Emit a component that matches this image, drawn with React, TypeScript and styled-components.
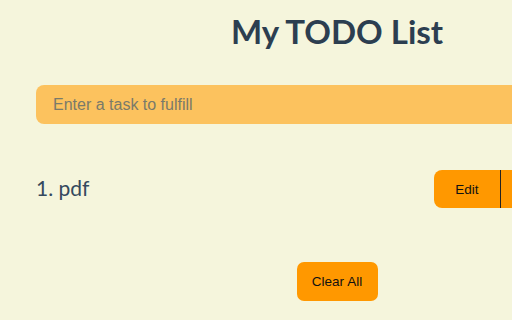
import styled, { createGlobalStyle } from 'styled-components';

const GlobalStyle = createGlobalStyle`
  html, body { margin: 0; background: #f5f5dc; }
  body { overflow: hidden; }
`;

const Page = styled.main`
  width: 674px;
  box-sizing: border-box;
  padding: 0 36px;
  display: flex;
  flex-direction: column;
  font-family: Lato, "Liberation Sans", sans-serif;
`;

const Title = styled.h1`
  margin: 11px 0 0;
  text-align: center;
  font-size: 33px;
  font-weight: 700;
  color: #2c3e50;
`;

const TaskInput = styled.input`
  margin-top: 34px;
  height: 39px;
  box-sizing: border-box;
  border: none;
  border-radius: 8px;
  background: #fcc25e;
  padding: 0 17px;
  font-family: "Liberation Sans", Arial, sans-serif;
  font-size: 16px;
  outline: none;
  &::placeholder { color: #7a7a6a; }
`;

const List = styled.ol`
  list-style: none;
  margin: 46px 0 0;
  padding: 0;
`;

const Item = styled.li`
  display: flex;
  align-items: center;
  justify-content: space-between;
  font-size: 21px;
  color: #34495e;
  & > span { margin-top: -4px; }
`;

const Group = styled.div`
  display: flex;
  margin-right: 67px;
`;

const Button = styled.button<{ $first?: boolean }>`
  height: 38px;
  width: ${p => (p.$first ? '67px' : '70px')};
  border: none;
  border-right: ${p => (p.$first ? '1px solid #222' : 'none')};
  border-radius: ${p => (p.$first ? '8px 0 0 8px' : '0 8px 8px 0')};
  background: #ff9800;
  color: #111;
  font-family: "Liberation Sans", Arial, sans-serif;
  font-size: 13.5px;
`;

const ClearButton = styled.button`
  align-self: center;
  margin-top: 54px;
  width: 81px;
  height: 39px;
  border: none;
  border-radius: 7px;
  background: #ff9800;
  color: #111;
  font-family: "Liberation Sans", Arial, sans-serif;
  font-size: 13.5px;
`;

export default function App() {
  return (
    <>
      <GlobalStyle />
      <Page>
        <Title>My TODO List</Title>
        <TaskInput placeholder="Enter a task to fulfill" />
        <List>
          <Item>
            <span>1. pdf</span>
            <Group>
              <Button $first>Edit</Button>
              <Button>Delete</Button>
            </Group>
          </Item>
        </List>
        <ClearButton>Clear All</ClearButton>
      </Page>
    </>
  );
}
